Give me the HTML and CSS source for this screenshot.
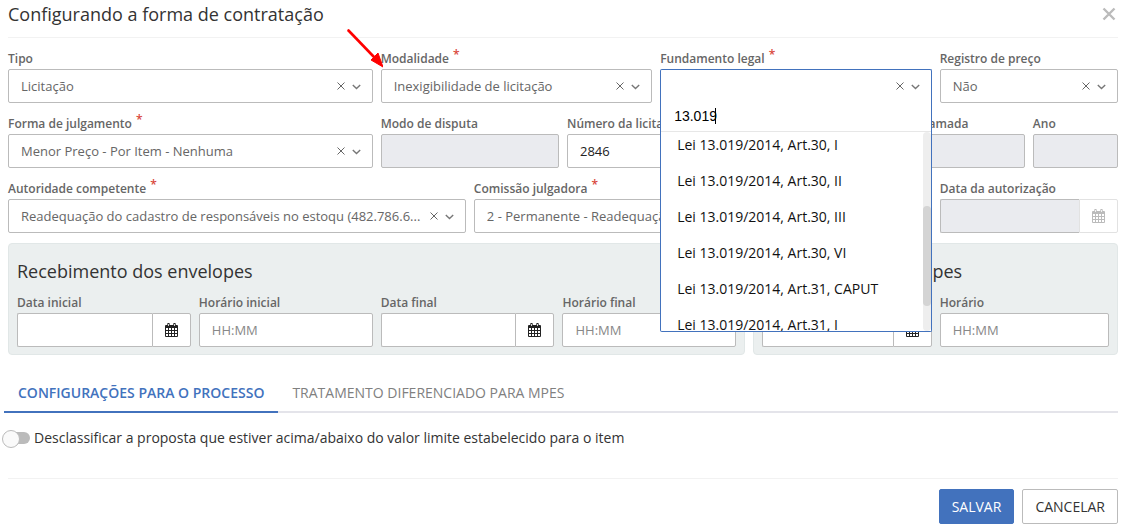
FILE: index.html
```html
<!DOCTYPE html>
<html lang="pt-BR">
<head>
<meta charset="utf-8">
<title>Configurando a forma de contratação</title>
<link rel="stylesheet" href="styles.css">
</head>
<body>
<svg class="defs" aria-hidden="true">
  <symbol id="clear" viewBox="0 0 8 8"><path d="M.5.5l7 7M7.500.5l-7 7" fill="none" stroke="currentColor" stroke-width="1"/></symbol>
  <symbol id="chevron" viewBox="0 0 9 6"><path d="M.8 1l3.7 3.6L8.2 1" fill="none" stroke="currentColor" stroke-width="1.4"/></symbol>
  <symbol id="calendar" viewBox="0 0 13 14"><path d="M1 2h11a1 1 0 0 1 1 1v10a1 1 0 0 1-1 1H1a1 1 0 0 1-1-1V3a1 1 0 0 1 1-1zM1 5v2h2V5zm3 0v2h2V5zm3 0v2h2V5zm3 0v2h2V5zM1 8v2h2V8zm3 0v2h2V8zm3 0v2h2V8zm3 0v2h2V8zM1 11v2h2v-2zm3 0v2h2v-2zm3 0v2h2v-2zm3 0v2h2v-2z" fill="currentColor" fill-rule="evenodd"/><path d="M3.500 1v2M9.500 1v2" stroke="currentColor" stroke-width="2.400" stroke-linecap="round"/><path d="M3.500 1v2M9.500 1v2" stroke="#fff" stroke-width=".8"/></symbol>
</svg>
<form class="dialog">
  <header class="header">
    <h1 class="title">Configurando a forma de contratação</h1>
    <button class="close" type="button" aria-label="Fechar"><svg width="14" height="14" viewBox="0 0 14 14"><path d="M1.500 1.500l11 11M12.500 1.500l-11 11" stroke="currentColor" stroke-width="2.400"/></svg></button>
  </header>
  <div class="grid">
    <div class="field span-4">
      <label class="label" for="tipo">Tipo</label>
      <div class="combo"><select class="control" id="tipo"><option>Licitação</option></select><button class="clear" type="button" aria-label="Limpar"><svg width="8" height="8"><use href="#clear"/></svg></button><svg class="chevron" width="9" height="6"><use href="#chevron"/></svg></div>
    </div>
    <div class="field span-3">
      <label class="label" for="modalidade">Modalidade<span class="required">*</span></label>
      <div class="combo"><select class="control" id="modalidade"><option>Inexigibilidade de licitação</option></select><button class="clear" type="button" aria-label="Limpar"><svg width="8" height="8"><use href="#clear"/></svg></button><svg class="chevron" width="9" height="6"><use href="#chevron"/></svg></div>
      <svg class="pointer" width="38" height="42" viewBox="0 0 38 42" aria-hidden="true"><path d="M3.500 2.500L29 29" stroke="red" stroke-width="2.600" stroke-linecap="round"/><path d="M38 39L26 32l7-7z" fill="red" stroke="red" stroke-width="1" stroke-linejoin="round"/></svg>
    </div>
    <div class="field span-3">
      <label class="label" for="fundamento">Fundamento legal<span class="required">*</span></label>
      <div class="combo open"><select class="control" id="fundamento"><option></option></select><button class="clear" type="button" aria-label="Limpar"><svg width="8" height="8"><use href="#clear"/></svg></button><svg class="chevron" width="9" height="6"><use href="#chevron"/></svg>
        <div class="menu">
          <div class="search"><input class="search-input" type="text" value="13.019" aria-label="Pesquisar"><span class="caret"></span></div>
          <div class="results">
            <ul class="options">
              <li>Lei 13.019/2014, Art.30, I</li>
              <li>Lei 13.019/2014, Art.30, II</li>
              <li>Lei 13.019/2014, Art.30, III</li>
              <li>Lei 13.019/2014, Art.30, VI</li>
              <li>Lei 13.019/2014, Art.31, CAPUT</li>
              <li>Lei 13.019/2014, Art.31, I</li>
            </ul>
            <div class="track"><div class="thumb"></div></div>
          </div>
        </div>
      </div>
    </div>
    <div class="field span-2">
      <label class="label" for="registro">Registro de preço</label>
      <div class="combo"><select class="control" id="registro"><option>Não</option></select><button class="clear" type="button" aria-label="Limpar"><svg width="8" height="8"><use href="#clear"/></svg></button><svg class="chevron" width="9" height="6"><use href="#chevron"/></svg></div>
    </div>

    <div class="field span-4">
      <label class="label" for="julgamento">Forma de julgamento<span class="required">*</span></label>
      <div class="combo"><select class="control" id="julgamento"><option>Menor Preço - Por Item - Nenhuma</option></select><button class="clear" type="button" aria-label="Limpar"><svg width="8" height="8"><use href="#clear"/></svg></button><svg class="chevron" width="9" height="6"><use href="#chevron"/></svg></div>
    </div>
    <div class="field span-2">
      <label class="label" for="disputa">Modo de disputa</label>
      <input class="control" id="disputa" type="text" disabled>
    </div>
    <div class="field span-2">
      <label class="label" for="numero">Número da licitação</label>
      <input class="control" id="numero" type="text" value="2846">
    </div>
    <div class="field span-1">
      <label class="label" for="ano-licitacao">Ano</label>
      <input class="control" id="ano-licitacao" type="text">
    </div>
    <div class="field span-2">
      <label class="label" for="chamada">Número da chamada</label>
      <input class="control" id="chamada" type="text" disabled>
    </div>
    <div class="field span-1">
      <label class="label" for="ano">Ano</label>
      <input class="control" id="ano" type="text" disabled>
    </div>

    <div class="field span-5">
      <label class="label" for="autoridade">Autoridade competente<span class="required">*</span></label>
      <div class="combo"><select class="control" id="autoridade"><option>Readequação do cadastro de responsáveis no estoqu (482.786.6...</option></select><button class="clear" type="button" aria-label="Limpar"><svg width="8" height="8"><use href="#clear"/></svg></button><svg class="chevron" width="9" height="6"><use href="#chevron"/></svg></div>
    </div>
    <div class="field span-5">
      <label class="label" for="comissao">Comissão julgadora<span class="required">*</span></label>
      <div class="combo"><select class="control" id="comissao"><option>2 - Permanente - Readequação</option></select></div>
    </div>
    <div class="field span-2">
      <label class="label" for="autorizacao">Data da autorização</label>
      <div class="date"><input class="control" id="autorizacao" type="text" disabled><button class="picker" type="button" aria-label="Abrir calendário" disabled><svg width="13" height="14"><use href="#calendar"/></svg></button></div>
    </div>

    <section class="panel span-8">
      <h2 class="title">Recebimento dos envelopes</h2>
      <div class="panel-fields four">
        <div class="field">
          <label class="label" for="data-inicial">Data inicial</label>
          <div class="date"><input class="control" id="data-inicial" type="text"><button class="picker" type="button" aria-label="Abrir calendário"><svg width="13" height="14"><use href="#calendar"/></svg></button></div>
        </div>
        <div class="field">
          <label class="label" for="hora-inicial">Horário inicial</label>
          <input class="control" id="hora-inicial" type="text" placeholder="HH:MM">
        </div>
        <div class="field">
          <label class="label" for="data-final">Data final</label>
          <div class="date"><input class="control" id="data-final" type="text"><button class="picker" type="button" aria-label="Abrir calendário"><svg width="13" height="14"><use href="#calendar"/></svg></button></div>
        </div>
        <div class="field">
          <label class="label" for="hora-final">Horário final</label>
          <input class="control" id="hora-final" type="text" placeholder="HH:MM">
        </div>
      </div>
    </section>
    <section class="panel span-4">
      <h2 class="title">Abertura dos envelopes</h2>
      <div class="panel-fields two">
        <div class="field">
          <label class="label" for="data-abertura">Data</label>
          <div class="date"><input class="control" id="data-abertura" type="text"><button class="picker" type="button" aria-label="Abrir calendário"><svg width="13" height="14"><use href="#calendar"/></svg></button></div>
        </div>
        <div class="field">
          <label class="label" for="hora-abertura">Horário</label>
          <input class="control" id="hora-abertura" type="text" placeholder="HH:MM">
        </div>
      </div>
    </section>
  </div>
  <div class="tabs" role="tablist">
    <button class="tab active" type="button" role="tab" aria-selected="true">CONFIGURAÇÕES PARA O PROCESSO</button>
    <button class="tab" type="button" role="tab" aria-selected="false">TRATAMENTO DIFERENCIADO PARA MPES</button>
  </div>
  <label class="toggle"><input class="switch" type="checkbox">Desclassificar a proposta que estiver acima/abaixo do valor limite estabelecido para o item</label>
  <footer class="footer">
    <button class="button primary" type="submit">SALVAR</button>
    <button class="button" type="button">CANCELAR</button>
  </footer>
</form>
</body>
</html>
```
FILE: styles.css
```css
* { box-sizing: border-box; }
body {
  margin: 0;
  background: #fff;
  color: #333;
  font: 14px/20px "Open Sans", "Noto Sans", sans-serif;
}
button, input, select { font: inherit; margin: 0; }
.defs { position: absolute; width: 0; height: 0; }
.dialog { padding: 0 3px 0 8px; }
.title { margin: 0; font-size: 18px; font-weight: 400; line-height: 28px; }
.header {
  display: flex;
  align-items: center;
  justify-content: space-between;
  height: 38px;
  padding-bottom: 9px;
  border-bottom: 1px solid #f2f2f2;
}
.close { display: flex; padding: 0 2px 0 0; border: 0; background: none; color: #bbb; }
.grid {
  display: grid;
  grid-template-columns: repeat(12, minmax(0, 1fr));
  gap: 10px 8px;
  padding-top: 10px;
}
.span-1 { grid-column: span 1; }
.span-2 { grid-column: span 2; }
.span-3 { grid-column: span 3; }
.span-4 { grid-column: span 4; }
.span-5 { grid-column: span 5; }
.span-8 { grid-column: span 8; }
.field { position: relative; min-width: 0; }
.label {
  display: block;
  height: 21px;
  color: #666;
  font-size: 12px;
  font-weight: 600;
  line-height: 22px;
  white-space: nowrap;
}
.required { margin-left: 4px; color: #d9463b; font-size: 12px; line-height: 1; vertical-align: 4px; }
.control {
  display: block;
  width: 100%;
  height: 34px;
  padding: 0 12px;
  border: 1px solid #bbb;
  border-radius: 2px;
  background: #fff;
  color: #222;
  font-size: 13px;
  outline: 0;
}
.control:disabled { background: #eaebef; }
.control::placeholder { color: #888; opacity: 1; }
select.control { appearance: none; color: #666; }
.combo { position: relative; }
.clear {
  position: absolute;
  top: 13px;
  right: 28px;
  display: flex;
  padding: 0;
  border: 0;
  background: none;
  color: #666;
}
.chevron { position: absolute; top: 15px; right: 12px; color: #777; }
.open .control { border-color: #4272bd; border-bottom-color: #fff; }
.menu {
  position: absolute;
  z-index: 2;
  top: 32px;
  left: 0;
  right: 0;
  border: 1px solid #4272bd;
  border-top: 0;
  border-radius: 0 0 2px 2px;
  background: #fff;
}
.search { position: relative; height: 31px; border-bottom: 1px solid #e7e7e7; }
.search-input {
  display: block;
  width: 100%;
  height: 30px;
  padding: 0 13px;
  border: 0;
  outline: 0;
  background: none;
  color: #000;
  font: 14px/20px "Liberation Sans", Arial, sans-serif;
}
.caret { position: absolute; top: 7px; left: 54px; width: 1px; height: 16px; background: #000; }
.results { display: flex; height: 199px; overflow: hidden; }
.options {
  display: flex;
  flex: 1;
  flex-direction: column;
  gap: 10px;
  margin: 0;
  padding: 0 0 0 16px;
  list-style: none;
  color: #111;
  line-height: 26px;
}
.track { width: 8px; padding-top: 74px; border-radius: 4px; background: #eee; }
.thumb { height: 100px; border-radius: 4px; background: #d4d4d4; }
.pointer { position: absolute; z-index: 1; top: -20px; left: -36px; }
.date { display: flex; }
.date .control { flex: 1; min-width: 0; border-radius: 2px 0 0 2px; border-right: 0; }
.picker {
  display: flex;
  align-items: center;
  justify-content: center;
  width: 39px;
  padding: 0;
  border: 1px solid #bbb;
  border-radius: 0 2px 2px 0;
  background: #fff;
  color: #222;
}
.picker:disabled { border-color: #e2e2e2; color: #bbb; }
.panel { padding: 13px 8px 7px; border: 1px solid #e1e7e7; border-radius: 4px; background: #ebefef; }
.panel-fields { display: grid; gap: 8px; padding-top: 7px; }
.four { grid-template-columns: repeat(4, minmax(0, 1fr)); }
.two { grid-template-columns: repeat(2, minmax(0, 1fr)); }
.tabs { display: flex; margin: 20px 0 0 -4px; border-bottom: 2px solid #e4e4ea; }
.tab {
  margin-bottom: -2px;
  padding: 8px 14px;
  border: 0;
  border-bottom: 2px solid transparent;
  background: none;
  color: #808080;
  line-height: 20px;
}
.tab.active { border-color: #4272bd; color: #4272bd; font-weight: 600; }
.toggle { display: flex; align-items: center; gap: 4px; margin: 15px 0 0 -5px; }
.switch {
  position: relative;
  width: 27px;
  height: 12px;
  appearance: none;
  border-radius: 6px;
  background: #bbb;
}
.switch::before {
  content: "";
  position: absolute;
  top: -2px;
  left: -1px;
  width: 16px;
  height: 16px;
  border: 1px solid #bbb;
  border-radius: 50%;
  background: #fafafa;
}
.footer {
  display: flex;
  justify-content: flex-end;
  gap: 8px;
  margin-top: 30px;
  padding-top: 10px;
  border-top: 1px solid #f2f2f2;
}
.button {
  height: 35px;
  padding: 0 12px;
  border: 1px solid #bbb;
  border-radius: 2px;
  background: #fff;
  color: #333;
}
.primary { border-color: #4272bd; background: #4272bd; color: #fff; font-weight: 500; }
```
